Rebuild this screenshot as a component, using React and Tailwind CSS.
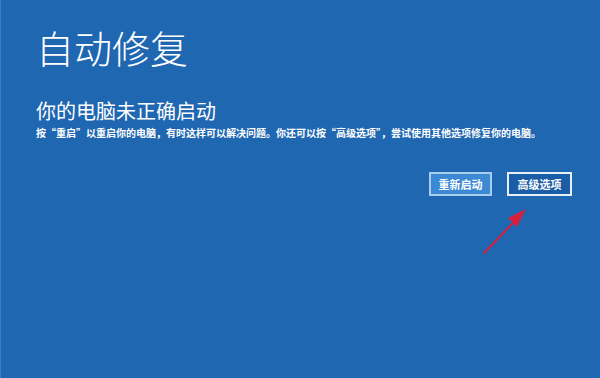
import React from "react";

const font = { fontFamily: '"Noto Sans CJK SC", "Noto Sans", sans-serif' };

export default function App() {
  return (
    <div
      className="relative w-[600px] h-[378px] bg-[#2067b2] text-white overflow-hidden border-l border-[#3a7cc0]"
      style={font}
    >
      <div className="pl-[35px] pt-[23px]">
        <h1 className="text-[38px] leading-[48px] font-light">自动修复</h1>
        <h2 className="mt-[27px] text-[20px] leading-[26px] font-normal">你的电脑未正确启动</h2>
        <p className="mt-[2px] text-[10px] leading-[14px] font-bold">
          按“重启”以重启你的电脑，有时这样可以解决问题。你还可以按“高级选项”，尝试使用其他选项修复你的电脑。
        </p>
      </div>
      <div className="flex justify-end gap-[15px] pr-[28px] mt-[32px]">
        <button className="w-[63px] h-[24px] bg-[#3c8ad4] border-2 border-[#a9cdf0] text-[11px] font-bold leading-none text-white">
          重新启动
        </button>
        <button className="w-[65px] h-[24px] bg-[#1b5ca6] border-2 border-[#e6eef8] text-[11px] font-bold leading-none text-white">
          高级选项
        </button>
      </div>
      <svg
        className="absolute left-0 top-0"
        width="600"
        height="378"
        viewBox="0 0 600 378"
      >
        <line x1="483" y1="253" x2="514" y2="221" stroke="#d61f3d" strokeWidth="2" strokeLinecap="round" />
        <polygon points="525,209 507,218 516,227" fill="#d61f3d" />
      </svg>
    </div>
  );
}
